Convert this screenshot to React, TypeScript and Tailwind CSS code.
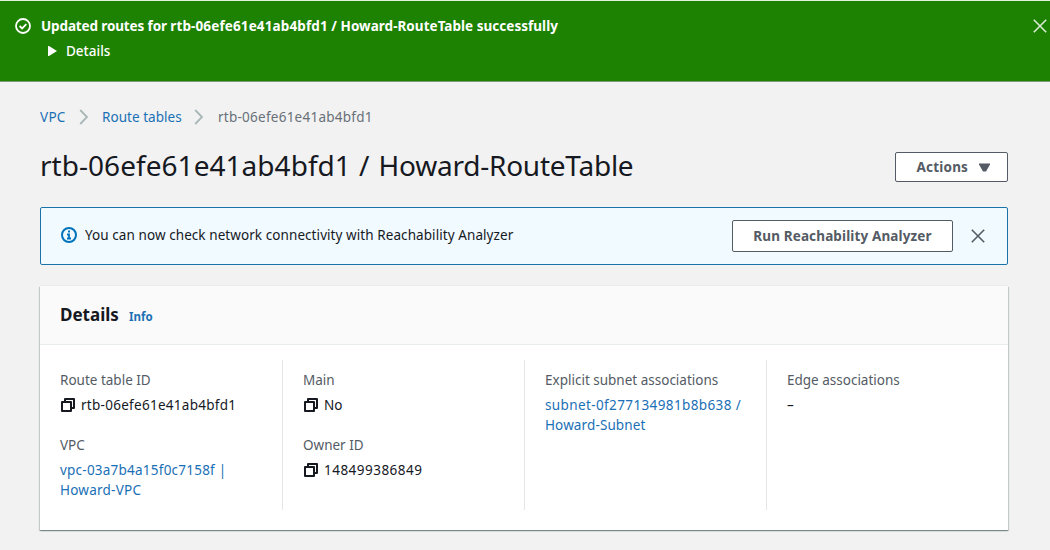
import type { ReactNode } from "react";

const Chevron = () => (
  <svg width="10" height="16" viewBox="0 0 10 16" fill="none" stroke="#aab7b8" strokeWidth="1.8" className="shrink-0">
    <path d="M1.2 1 8 8 1.2 15" />
  </svg>
);

const Close = ({ color }: { color: string }) => (
  <svg width="14" height="14" viewBox="0 0 14 14" fill="none" stroke={color} strokeWidth="1.6" className="block shrink-0">
    <path d="M.8.8 13.2 13.2M13.2.8.8 13.2" />
  </svg>
);

const Copy = () => (
  <svg width="16" height="16" viewBox="0 0 16 16" fill="none" stroke="#16191f" strokeWidth="2" strokeLinejoin="round" className="mr-[5px] shrink-0">
    <path d="M2 5h9v9H2z" />
    <path d="M5 5V2h9v9h-3" />
  </svg>
);

const Label = ({ children }: { children: ReactNode }) => (
  <div className="h-5 leading-5 text-[#545b64]">{children}</div>
);

const Value = ({ children }: { children: ReactNode }) => (
  <div className="mt-[5px] flex h-5 items-center leading-5">{children}</div>
);

export default function App() {
  return (
    <div className="h-[550px] w-[1050px] overflow-hidden whitespace-nowrap bg-[#f2f2f2] font-['Noto_Sans',sans-serif] text-[13.5px] text-[#16191f]">
      <header className="flex h-[82px] items-start border-t border-b border-t-[#e3f3df] border-b-[#7d9a7a] bg-[#1d8102] pt-[15px] pl-[15px] text-white">
        <svg width="16" height="16" viewBox="0 0 16 16" fill="none" stroke="white" strokeWidth="1.8" className="mt-[2px] shrink-0">
          <circle cx="8" cy="8" r="7" />
          <path d="m4.6 8 2.5 2.4 4.2-4.3" />
        </svg>
        <div className="ml-[10px] flex-1">
          <div className="h-5 leading-5 font-bold">
            <span className="tracking-[-0.13px]">Updated routes for </span>
            <span className="tracking-[0.13px]">rtb-06efe61e41ab4bfd1</span>
            <span className="tracking-[0.03px]"> / Howard-RouteTable successfully</span>
          </div>
          <div className="mt-[5px] flex h-5 items-center pl-[7px] leading-5 font-medium">
            <svg width="9" height="10" viewBox="0 0 9 10" fill="white" className="mr-[9px]">
              <path d="M0 0h1l8 5-8 5H0z" />
            </svg>
            <span>Details</span>
          </div>
        </div>
        <button className="mt-[3px] mr-[3px]"><Close color="#d9ead5" /></button>
      </header>

      <main className="pr-[42px] pl-10">
        <nav className="flex h-[70px] items-center text-[#1a70b5]">
          <span className="w-[39px] tracking-[0.3px]">VPC</span>
          <Chevron />
          <span className="ml-[13px] w-[92px] tracking-[0.04px]">Route tables</span>
          <Chevron />
          <span className="ml-[14px] tracking-[0.25px] text-[#687078]">rtb-06efe61e41ab4bfd1</span>
        </nav>

        <div className="flex h-[30px] items-center justify-between">
          <h1 className="-mt-[5px] text-[28px] leading-[30px]">
            <span className="tracking-[0.04px]">rtb-06efe61e41ab4bfd1</span>
            <span className="tracking-[0.9px]"> / </span>
            <span className="tracking-[-0.24px]">Howard-RouteTable</span>
          </h1>
          <button className="flex h-[30px] w-[113px] items-center rounded-[2px] border border-[#545b64] bg-white pl-[20.5px] font-bold tracking-[0.2px] text-[#545b64]">
            <span className="w-[62px] text-left">Actions</span>
            <svg width="11" height="9" viewBox="0 0 11 9" fill="#545b64"><path d="M0 .5h11v1L7 8.5H4L0 1.5z" /></svg>
          </button>
        </div>

        <section className="mt-[25px] flex h-[58px] items-center rounded-[2px] border border-[#1a73a8] bg-[#f1faff] pl-5">
          <svg width="16" height="16" viewBox="0 0 16 16" fill="none" stroke="#0073bb" strokeWidth="2" className="mr-[8px] -mt-[2px] shrink-0">
            <circle cx="8" cy="8" r="7" />
            <path d="M7 4.5h2M6 7.5h2v4M6 11.5h4" strokeWidth="1.8" />
          </svg>
          <span className="-mt-[2px] flex-1 tracking-[0.075px]">You can now check network connectivity with Reachability Analyzer</span>
          <button className="mr-[18px] h-8 w-[221px] rounded-[2px] border border-[#545b64] bg-white text-center font-bold tracking-[0.13px] text-[#545b64]">
            Run Reachability Analyzer
          </button>
          <button className="mr-[22px]"><Close color="#545b64" /></button>
        </section>

        <section className="mt-[21px] h-[244px] bg-white shadow-[0_1px_1px_0_rgba(0,28,36,0.3),1px_1px_1px_0_rgba(0,28,36,0.15),-1px_1px_1px_0_rgba(0,28,36,0.15),0_-1px_0_0_#eaeded]">
          <div className="flex h-[59px] items-center border-b border-[#eaeded] bg-[#fafafa] pl-5">
            <h2 className="w-[69px] text-[17px] font-bold">Details</h2>
            <a className="mt-[4px] text-[11.5px] font-bold text-[#1a70b5]">Info</a>
          </div>
          <div className="my-[15px] grid h-[150px] grid-cols-[242px_242px_242px_242px] [&>div]:pt-[10px] [&>div+div]:border-l [&>div+div]:border-[#e4e7e7]">
            <div className="pl-5">
              <Label>Route table ID</Label>
              <Value><Copy /><span className="tracking-[0.28px]">rtb-06efe61e41ab4bfd1</span></Value>
              <div className="h-5" />
              <Label>VPC</Label>
              <a className="mt-[5px] block leading-5 tracking-[0.23px] text-[#1a70b5]">vpc-03a7b4a15f0c7158f |<br />Howard-VPC</a>
            </div>
            <div className="pl-5">
              <Label>Main</Label>
              <Value><Copy />No</Value>
              <div className="h-5" />
              <Label>Owner ID</Label>
              <Value><Copy /><span className="tracking-[0.48px]">148499386849</span></Value>
            </div>
            <div className="pl-5">
              <Label>Explicit subnet associations</Label>
              <a className="mt-[5px] block leading-5 text-[#1a70b5]">
                <span className="tracking-[0.38px]">subnet-0f277134981b8b638 /</span><br />
                <span className="tracking-[0.12px]">Howard-Subnet</span>
              </a>
            </div>
            <div className="pl-5">
              <Label>Edge associations</Label>
              <Value>–</Value>
            </div>
          </div>
        </section>
      </main>
    </div>
  );
}
